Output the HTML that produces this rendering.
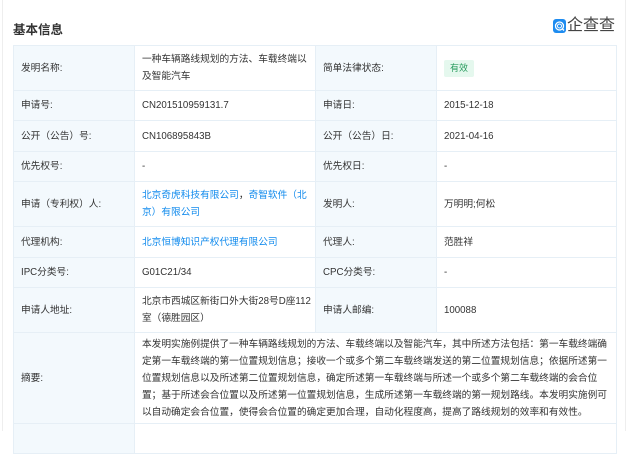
<!DOCTYPE html>
<html><head><meta charset="utf-8"><style>
*{margin:0;padding:0;box-sizing:border-box}
body{width:630px;height:431px;overflow:hidden;background:#fff;font-family:"Liberation Sans","Noto Sans CJK SC",sans-serif;color:#333;position:relative}
.frame{position:absolute;left:2px;top:0;width:624px;height:431px;border-left:1px solid #eee;border-right:1px solid #eee}
.title{position:absolute;left:13px;top:19px;font-size:12.5px;font-weight:bold;color:#333}
.logo{position:absolute;left:553px;top:18px;height:16px;display:flex;align-items:center}
.ic{width:13px;height:14px;border-radius:3px;background:#1e8cf0;position:relative;margin-right:1px}
.lt{font-size:16px;color:#444;line-height:16px}
table{position:absolute;left:13px;top:45px;border-collapse:collapse;table-layout:fixed;font-size:9.7px}
td{border:1px solid #e6eff6;padding:0 4px 0 7px;line-height:17px;vertical-align:middle;overflow:hidden}
tr{overflow:hidden}
td.l{background:#f3f9fd;color:#333}
a{color:#128bed;text-decoration:none}
.badge{display:inline-block;background:#e5f8ee;color:#2a9d5f;font-size:9px;padding:0 6px;line-height:17px;border-radius:2px}
</style></head><body>
<div class="frame"></div>
<div class="title">基本信息</div>
<div class="logo"><div class="ic"><svg width="13" height="14" viewBox="0 0 13 14"><circle cx="6.5" cy="7" r="4" fill="none" stroke="#fff" stroke-width="1.3"/><circle cx="6.5" cy="7" r="2" fill="none" stroke="#fff" stroke-width="1"/><path d="M9 9.5 L11 11.5" stroke="#fff" stroke-width="1.3"/></svg></div><span class="lt">企查查</span></div>
<table>
<colgroup><col style="width:121px"><col style="width:181px"><col style="width:121px"><col style="width:180px"></colgroup>
<tr style="height:45px"><td class="l">发明名称:</td><td>一种车辆路线规划的方法、车载终端以及智能汽车</td><td class="l">简单法律状态:</td><td><span class="badge">有效</span></td></tr>
<tr style="height:30px"><td class="l">申请号:</td><td>CN201510959131.7</td><td class="l">申请日:</td><td>2015-12-18</td></tr>
<tr style="height:31px"><td class="l">公开（公告）号:</td><td>CN106895843B</td><td class="l">公开（公告）日:</td><td>2021-04-16</td></tr>
<tr style="height:30px"><td class="l">优先权号:</td><td>-</td><td class="l">优先权日:</td><td>-</td></tr>
<tr style="height:45px"><td class="l">申请（专利权）人:</td><td><a>北京奇虎科技有限公司</a>，<a>奇智软件（北京）有限公司</a></td><td class="l">发明人:</td><td>万明明;何松</td></tr>
<tr style="height:31px"><td class="l">代理机构:</td><td><a>北京恒博知识产权代理有限公司</a></td><td class="l">代理人:</td><td>范胜祥</td></tr>
<tr style="height:30px"><td class="l">IPC分类号:</td><td>G01C21/34</td><td class="l">CPC分类号:</td><td>-</td></tr>
<tr style="height:45px"><td class="l">申请人地址:</td><td>北京市西城区新街口外大街28号D座112室（德胜园区）</td><td class="l">申请人邮编:</td><td>100088</td></tr>
<tr style="height:91px"><td class="l">摘要:</td><td colspan="3">本发明实施例提供了一种车辆路线规划的方法、车载终端以及智能汽车，其中所述方法包括：第一车载终端确定第一车载终端的第一位置规划信息；接收一个或多个第二车载终端发送的第二位置规划信息；依据所述第一位置规划信息以及所述第二位置规划信息，确定所述第一车载终端与所述一个或多个第二车载终端的会合位置；基于所述会合位置以及所述第一位置规划信息，生成所述第一车载终端的第一规划路线。本发明实施例可以自动确定会合位置，使得会合位置的确定更加合理，自动化程度高，提高了路线规划的效率和有效性。</td></tr>
<tr style="height:30px"><td class="l"></td><td colspan="3"></td></tr>
</table>
</body></html>
